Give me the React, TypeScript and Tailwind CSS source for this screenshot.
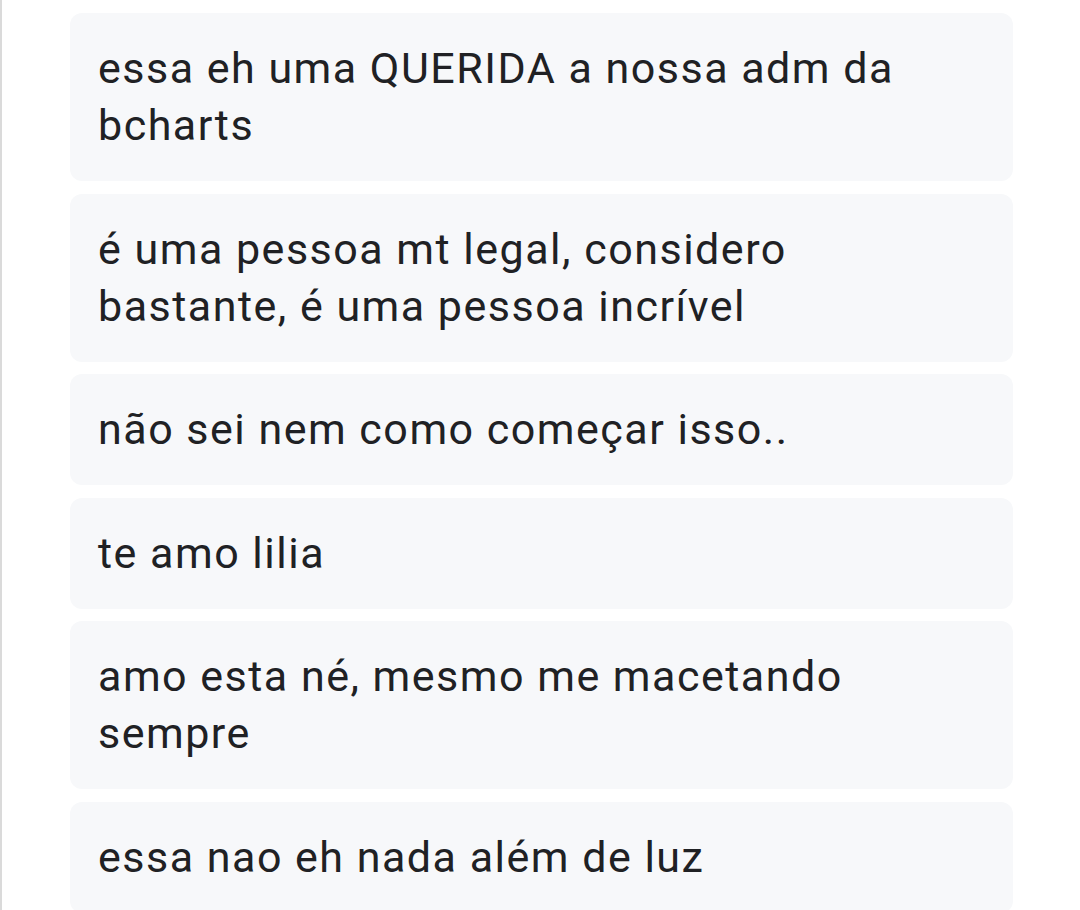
export default function App() {
  const items = [
    "essa eh uma QUERIDA a nossa adm da bcharts",
    "é uma pessoa mt legal, considero bastante, é uma pessoa incrível",
    "não sei nem como começar isso..",
    "te amo lilia",
    "amo esta né, mesmo me macetando sempre",
    "essa nao eh nada além de luz",
  ];
  return (
    <div className="w-[1080px] h-[910px] overflow-hidden bg-white" style={{ fontFamily: "Roboto, 'Noto Sans', sans-serif" }}>
      <div className="h-full border-l-2 border-[#dadada] pl-[68px] pr-[67px] pt-[13px] flex flex-col gap-[12.5px]">
        {items.map((t, i) => (
          <div key={i} className="shrink-0 rounded-[12px] bg-[#f7f8fa] pl-[28px] pr-[56px] py-[27px] text-[43px] leading-[57px] tracking-[1.5px] text-[#202124]">
            {t}
          </div>
        ))}
      </div>
    </div>
  );
}
